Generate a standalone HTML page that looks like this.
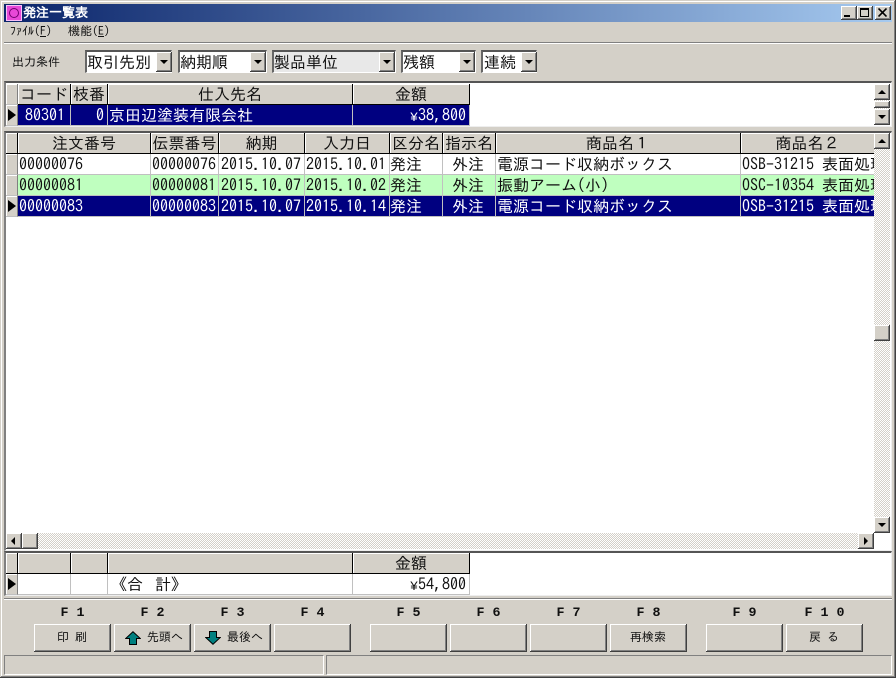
<!DOCTYPE html>
<html lang="ja">
<head>
<meta charset="utf-8">
<title>発注一覧表</title>
<style>
html,body{margin:0;padding:0;background:#d4d0c8}
#w{position:relative;width:896px;height:678px;overflow:hidden;background:#d4d0c8;font-family:"IPAGothic","Noto Sans CJK JP",sans-serif;font-size:16px;color:#111}
#w div{position:absolute;box-sizing:border-box;white-space:pre;overflow:hidden}
.l{background:#808080}
.wh{background:#fff}
.frame{background:#fff;border-top:2px solid #555;border-left:2px solid #808080;border-right:1px solid #eee;border-bottom:1px solid #eee}
.h{height:21px;background:#d4d0c8;border-right:1px solid #000;border-bottom:1px solid #000;box-shadow:inset 1px 1px 0 #fff;text-align:center;line-height:21px}
.c{height:21px;border-right:1px solid #c0c0c0;border-bottom:1px solid #c0c0c0;line-height:21px;padding-left:1px}
.r{text-align:right;padding-right:3px;padding-left:0}
.m{text-align:center;padding-left:0;padding-right:2px}
.sel{background:#000080;color:#fff}
.grn{background:#bfffbf}
.ind{left:6px;width:12px;height:21px;background:#d4d0c8;border-right:1px solid #808080;border-bottom:1px solid #c0c0c0;box-shadow:inset 1px 1px 0 #fff}
.tri{left:2px;top:4px;width:0;height:0;border-left:8px solid #000;border-top:6px solid transparent;border-bottom:6px solid transparent}
.y{font-family:"Liberation Mono",monospace;font-size:13.33px}
.b{background:#d4d0c8;border-right:1px solid #404040;border-bottom:1px solid #404040;box-shadow:inset 1px 1px 0 #fff,inset -1px -1px 0 #808080}
.up,.dn,.lf,.rt{width:0;height:0}
.up{border-left:4px solid transparent;border-right:4px solid transparent;border-bottom:4px solid #000}
.dn{border-left:4px solid transparent;border-right:4px solid transparent;border-top:4px solid #000}
.lf{border-top:4px solid transparent;border-bottom:4px solid transparent;border-right:4px solid #000}
.rt{border-top:4px solid transparent;border-bottom:4px solid transparent;border-left:4px solid #000}
.combo{top:50px;height:23px;background:#fff;border-top:2px solid #555;border-left:2px solid #666;border-right:1px solid #fff;border-bottom:1px solid #fff;line-height:20px;padding-left:0}
.track{background-color:#d4d0c8;background-image:conic-gradient(#fff 25%,#d4d0c8 0 50%,#fff 0 75%,#d4d0c8 0);background-size:2px 2px}
.f{top:606px;height:16px;font:bold 13.33px/16px "Liberation Mono","IPAGothic",monospace;text-align:center;white-space:pre}
.btn{top:624px;width:77px;height:28px;background:#d4d0c8;border-right:1px solid #404040;border-bottom:1px solid #404040;box-shadow:inset 1px 1px 0 #fff,inset -1px -1px 0 #808080;font-size:12px;line-height:27px;text-align:center}
.s12{font-size:12px;line-height:14px}
.st{top:655px;height:20px;border-top:1px solid #808080;border-left:1px solid #808080;border-right:1px solid #fff;border-bottom:1px solid #fff}
</style>
</head>
<body>
<div id="w">
<!-- outer window edges -->
<div class="wh" style="left:1px;top:1px;width:894px;height:1px"></div>
<div class="wh" style="left:1px;top:1px;width:1px;height:676px"></div>
<div class="l" style="left:894px;top:1px;width:1px;height:676px"></div>
<div style="left:895px;top:0;width:1px;height:678px;background:#404040"></div>
<div class="l" style="left:1px;top:676px;width:894px;height:1px"></div>
<div style="left:0;top:677px;width:896px;height:1px;background:#404040"></div>

<!-- title bar -->
<div style="left:4px;top:4px;width:888px;height:18px;background:linear-gradient(90deg,#0a246a,#a6caf0)"></div>
<div style="left:6px;top:5px;width:16px;height:16px;background:#e848d8;border:1px solid #f8c0f8"></div>
<div style="left:9px;top:8px;width:10px;height:10px;border:1px solid #700070;border-radius:50%"></div>
<div style="left:23px;top:5px;width:100px;height:16px;color:#fff;font-size:13px;font-weight:bold;line-height:16px">発注一覧表</div>
<div class="b" style="left:841px;top:6px;width:16px;height:14px"><div style="left:3px;top:9px;width:6px;height:2px;background:#000"></div></div>
<div class="b" style="left:857px;top:6px;width:16px;height:14px"><div style="left:3px;top:2px;width:9px;height:9px;border:1px solid #000;border-top-width:2px"></div></div>
<div class="b" style="left:875px;top:6px;width:16px;height:14px"><svg style="position:absolute;left:3px;top:2px" width="9" height="9" viewBox="0 0 9 9"><path d="M0.5 0.5L8.5 8.5M8.5 0.5L0.5 8.5" stroke="#000" stroke-width="1.6" fill="none"/></svg></div>

<!-- menu -->
<div class="s12" style="left:10px;top:24px;width:50px;height:15px">ﾌｧｲﾙ(<u>F</u>)</div>
<div class="s12" style="left:68px;top:24px;width:50px;height:15px">機能(<u>E</u>)</div>
<div class="l" style="left:4px;top:42px;width:888px;height:1px"></div>
<div class="wh" style="left:4px;top:43px;width:888px;height:1px"></div>

<!-- filter bar -->
<div class="s12" style="left:12px;top:55px;width:60px;height:15px">出力条件</div>

<div class="combo" style="left:85px;width:87px">取引先別</div>
<div class="b" style="left:156px;top:52px;width:16px;height:20px"><div class="dn" style="left:4px;top:8px"></div></div>
<div class="combo" style="left:178px;width:89px">納期順</div>
<div class="b" style="left:250px;top:52px;width:16px;height:20px"><div class="dn" style="left:4px;top:8px"></div></div>
<div class="combo" style="left:272px;width:124px;background:#e8e8e8">製品単位</div>
<div class="b" style="left:379px;top:52px;width:16px;height:20px"><div class="dn" style="left:4px;top:8px"></div></div>
<div class="combo" style="left:401px;width:75px">残額</div>
<div class="b" style="left:459px;top:52px;width:16px;height:20px"><div class="dn" style="left:4px;top:8px"></div></div>
<div class="combo" style="left:481px;width:56px;padding-left:1px">連続</div>
<div class="b" style="left:521px;top:52px;width:16px;height:20px"><div class="dn" style="left:4px;top:8px"></div></div>

<!-- top grid -->
<div class="frame" style="left:4px;top:81px;width:888px;height:46px"></div>
<div class="ind" style="top:84px"></div>
<div class="h" style="left:18px;top:84px;width:53px">コード</div>
<div class="h" style="left:71px;top:84px;width:37px">枝番</div>
<div class="h" style="left:108px;top:84px;width:245px">仕入先名</div>
<div class="h" style="left:353px;top:84px;width:117px">金額</div>
<div class="ind" style="top:105px"><div class="tri"></div></div>
<div class="c r sel" style="left:18px;top:105px;width:53px;padding-right:5px">80301</div>
<div class="c r sel" style="left:71px;top:105px;width:37px">0</div>
<div class="c sel" style="left:108px;top:105px;width:245px">京田辺塗装有限会社</div>
<div class="c r sel" style="left:353px;top:105px;width:117px"><span class="y">¥</span>38,800</div>
<div class="b" style="left:874px;top:84px;width:16px;height:16px"><div class="up" style="left:4px;top:6px"></div></div>
<div class="track" style="left:874px;top:100px;width:16px;height:9px"></div>
<div class="b" style="left:874px;top:101px;width:16px;height:7px"></div>
<div class="b" style="left:874px;top:109px;width:16px;height:16px"><div class="dn" style="left:4px;top:6px"></div></div>

<!-- main grid -->
<div class="frame" style="left:4px;top:131px;width:888px;height:420px"></div>
<div class="ind" style="top:133px;border-right:1px solid #000;border-bottom:1px solid #000"></div>
<div class="h" style="left:18px;top:133px;width:133px">注文番号</div>
<div class="h" style="left:151px;top:133px;width:68px">伝票番号</div>
<div class="h" style="left:219px;top:133px;width:86px">納期</div>
<div class="h" style="left:305px;top:133px;width:85px">入力日</div>
<div class="h" style="left:390px;top:133px;width:53px">区分名</div>
<div class="h" style="left:443px;top:133px;width:53px">指示名</div>
<div class="h" style="left:496px;top:133px;width:245px">商品名１</div>
<div class="h" style="left:741px;top:133px;width:133px;border-right:0">商品名２</div>

<!-- row 1 -->
<div class="ind" style="top:154px"></div>
<div class="c" style="left:18px;top:154px;width:133px">00000076</div>
<div class="c" style="left:151px;top:154px;width:68px">00000076</div>
<div class="c" style="left:219px;top:154px;width:86px;padding-left:2px">2015.10.07</div>
<div class="c" style="left:305px;top:154px;width:85px">2015.10.01</div>
<div class="c" style="left:390px;top:154px;width:53px;padding-left:0">発注</div>
<div class="c m" style="left:443px;top:154px;width:53px">外注</div>
<div class="c" style="left:496px;top:154px;width:245px">電源コード収納ボックス</div>
<div class="c" style="left:741px;top:154px;width:133px;border-right:0">OSB-31215 表面処理</div>
<!-- row 2 -->
<div class="ind" style="top:175px"></div>
<div class="c grn" style="left:18px;top:175px;width:133px">00000081</div>
<div class="c grn" style="left:151px;top:175px;width:68px">00000081</div>
<div class="c grn" style="left:219px;top:175px;width:86px;padding-left:2px">2015.10.07</div>
<div class="c grn" style="left:305px;top:175px;width:85px">2015.10.02</div>
<div class="c grn" style="left:390px;top:175px;width:53px;padding-left:0">発注</div>
<div class="c m grn" style="left:443px;top:175px;width:53px">外注</div>
<div class="c grn" style="left:496px;top:175px;width:245px">振動アーム(小)</div>
<div class="c grn" style="left:741px;top:175px;width:133px;border-right:0">OSC-10354 表面処理</div>
<!-- row 3 -->
<div class="ind" style="top:196px"><div class="tri"></div></div>
<div class="c sel" style="left:18px;top:196px;width:133px">00000083</div>
<div class="c sel" style="left:151px;top:196px;width:68px">00000083</div>
<div class="c sel" style="left:219px;top:196px;width:86px;padding-left:2px">2015.10.07</div>
<div class="c sel" style="left:305px;top:196px;width:85px">2015.10.14</div>
<div class="c sel" style="left:390px;top:196px;width:53px;padding-left:0">発注</div>
<div class="c m sel" style="left:443px;top:196px;width:53px">外注</div>
<div class="c sel" style="left:496px;top:196px;width:245px">電源コード収納ボックス</div>
<div class="c sel" style="left:741px;top:196px;width:133px;border-right:0">OSB-31215 表面処理</div>

<!-- vertical scrollbar -->
<div class="track" style="left:874px;top:133px;width:16px;height:400px"></div>
<div class="b" style="left:874px;top:133px;width:16px;height:16px"><div class="up" style="left:4px;top:6px"></div></div>
<div class="b" style="left:874px;top:325px;width:16px;height:16px"></div>
<div class="b" style="left:874px;top:517px;width:16px;height:16px"><div class="dn" style="left:4px;top:6px"></div></div>
<!-- horizontal scrollbar -->
<div class="track" style="left:6px;top:533px;width:868px;height:16px"></div>
<div class="b" style="left:6px;top:533px;width:16px;height:16px"><div class="lf" style="left:5px;top:4px"></div></div>
<div class="b" style="left:22px;top:533px;width:16px;height:16px"></div>
<div class="b" style="left:858px;top:533px;width:16px;height:16px"><div class="rt" style="left:6px;top:4px"></div></div>

<!-- total grid -->
<div class="frame" style="left:4px;top:551px;width:888px;height:45px"></div>
<div class="ind" style="top:553px;border-right:1px solid #000;border-bottom:1px solid #000"></div>
<div class="h" style="left:18px;top:553px;width:53px"></div>
<div class="h" style="left:71px;top:553px;width:37px"></div>
<div class="h" style="left:108px;top:553px;width:245px"></div>
<div class="h" style="left:353px;top:553px;width:117px">金額</div>
<div class="ind" style="top:574px"><div class="tri"></div></div>
<div class="c" style="left:18px;top:574px;width:53px"></div>
<div class="c" style="left:71px;top:574px;width:37px"></div>
<div class="c" style="left:108px;top:574px;width:245px;padding-left:3px">《合<span style="display:inline-block;width:12px"></span>計》</div>
<div class="c r" style="left:353px;top:574px;width:117px"><span class="y">¥</span>54,800</div>

<!-- separators -->
<div class="l" style="left:4px;top:598px;width:888px;height:1px"></div>
<div class="wh" style="left:4px;top:599px;width:888px;height:1px"></div>

<!-- function labels -->
<div class="f" style="left:34px;width:77px">F 1</div>
<div class="f" style="left:114px;width:77px">F 2</div>
<div class="f" style="left:194px;width:77px">F 3</div>
<div class="f" style="left:274px;width:77px">F 4</div>
<div class="f" style="left:370px;width:77px">F 5</div>
<div class="f" style="left:450px;width:77px">F 6</div>
<div class="f" style="left:530px;width:77px">F 7</div>
<div class="f" style="left:610px;width:77px">F 8</div>
<div class="f" style="left:706px;width:77px">F 9</div>
<div class="f" style="left:786px;width:77px">F 1 0</div>

<!-- buttons -->
<div class="btn" style="left:34px">印 刷</div>
<div class="btn" style="left:114px;padding-left:33px;text-align:left">先頭へ<svg style="position:absolute;left:11px;top:7px" width="16" height="14" viewBox="0 0 16 14"><path d="M8 .7L15.3 7.5H11.5V13.5H4.5V7.5H.7Z" fill="#008080" stroke="#000" stroke-width="1"/></svg></div>
<div class="btn" style="left:194px;padding-left:33px;text-align:left">最後へ<svg style="position:absolute;left:11px;top:7px" width="16" height="14" viewBox="0 0 16 14"><path d="M8 13.3L15.3 6.5H11.5V.5H4.5V6.5H.7Z" fill="#008080" stroke="#000" stroke-width="1"/></svg></div>
<div class="btn" style="left:274px"></div>
<div class="btn" style="left:370px"></div>
<div class="btn" style="left:450px"></div>
<div class="btn" style="left:530px"></div>
<div class="btn" style="left:610px">再検索</div>
<div class="btn" style="left:706px"></div>
<div class="btn" style="left:786px">戻 る</div>

<!-- status bar -->
<div class="st" style="left:4px;width:320px"></div>
<div class="st" style="left:326px;width:566px"></div>
</div>
</body>
</html>
